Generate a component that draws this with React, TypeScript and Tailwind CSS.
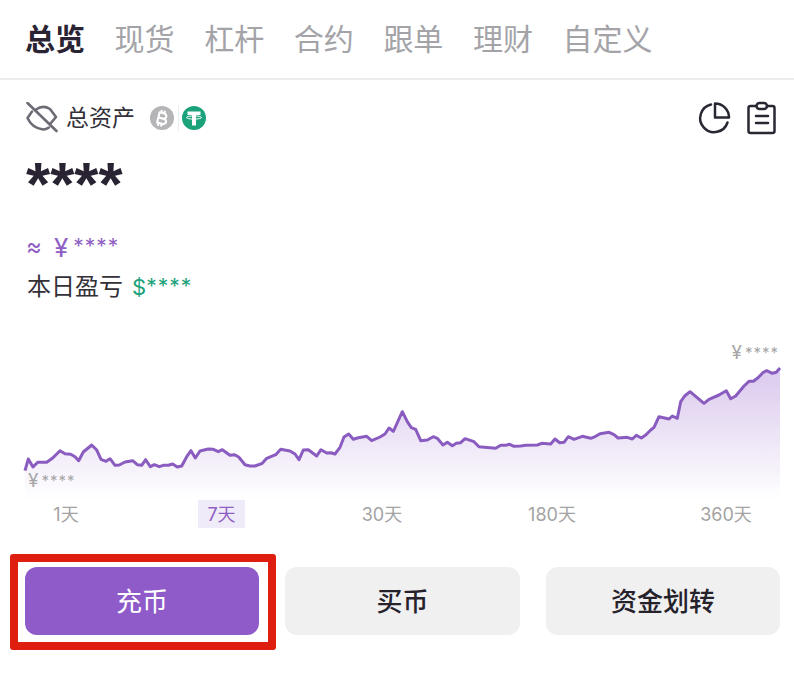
import React from "react";
import { FaBitcoinSign } from "react-icons/fa6";

const tabs = ["总览", "现货", "杠杆", "合约", "跟单", "理财", "自定义"];
const ranges = [
  { label: "1天", box: "w-[80px]" },
  { label: "7天", box: "w-[47px] ml-[92px]", active: true },
  { label: "30天", box: "w-[80px] ml-[97px]" },
  { label: "180天", box: "w-[80px] ml-[90px]" },
  { label: "360天", box: "w-[80px] ml-[94px]" },
];

// traced from the picture, in 3x crop coordinates
const leftPts = [
  [75,392],[85,357],[99,381],[113,367],[140,367],[158,354],[180,332],[195,341],[212,343],[225,350],[236,362],[250,336],[275,315],[290,330],[303,358],[318,364],[330,356],[345,376],[358,375],[375,366],[398,362],[412,374],[425,376],[437,359],[451,380],[463,374],[478,380],[490,376],[505,376],[518,372],[532,381],[545,378],[560,350],[573,332],[586,354],[600,333],[625,327],[640,328],[655,335],[667,329],[690,346],[703,344],[716,351],[735,374],[750,378],[765,378],[787,370],[800,355],[827,344],[842,328],[870,333],[885,342],[897,359],[910,330],[925,329],[950,348],[963,329],[980,339],[993,338],[1005,342],[1020,322],[1032,291],[1046,282],[1060,298],[1075,293],[1100,289],[1115,302],[1140,291],[1155,282],[1167,264],[1180,274],
];
const rightPts = [
  [0,270],[25,215],[40,245],[52,263],[65,268],[80,302],[100,300],[118,290],[130,295],[147,315],[160,307],[175,317],[187,310],[200,308],[213,296],[240,305],[255,320],[305,325],[320,316],[335,316],[347,313],[360,319],[380,318],[395,316],[430,315],[443,310],[470,312],[483,297],[497,308],[510,307],[523,290],[540,298],[565,289],[590,295],[605,289],[618,281],[645,277],[660,284],[672,294],[700,292],[715,297],[727,286],[742,294],[755,285],[770,270],[780,262],[795,230],[825,237],[835,228],[850,235],[860,185],[872,168],[888,155],[930,190],[945,178],[975,165],[997,152],[1010,176],[1025,168],[1050,138],[1065,124],[1078,124],[1092,113],[1108,97],[1118,92],[1135,100],[1147,97],[1158,84],
];
const line = [
  ...leftPts.map(([x, y]) => [x / 3, y / 3]),
  ...rightPts.map(([x, y]) => [394 + x / 3, y / 3]),
];
const linePath = line.map(([x, y], i) => `${i ? "L" : "M"}${x.toFixed(1)} ${y.toFixed(1)}`).join(" ");
const areaPath = `${linePath} L780 160 L25 160 Z`;

const ChartLabel = ({ className }: { className: string }) => (
  <span className={`absolute flex items-center text-[#a6a6a6] leading-[20px] ${className}`}>
    <span className="text-[19px]">¥</span>
    <span className="ml-[3px] text-[15px] tracking-[1px]">****</span>
  </span>
);

const Chart = () => (
  <div className="relative h-[160px] mt-[39px]">
    <svg width="794" height="160" viewBox="0 0 794 160" className="block">
      <defs>
        <linearGradient id="area" x1="0" y1="0" x2="0" y2="1">
          <stop offset="0.1" stopColor="#8f5bc9" stopOpacity="0.3" />
          <stop offset="1" stopColor="#8f5bc9" stopOpacity="0" />
        </linearGradient>
      </defs>
      <path d={areaPath} fill="url(#area)" />
      <path d={linePath} fill="none" stroke="#8a5cc0" strokeWidth="3" strokeLinejoin="round" />
    </svg>
    <ChartLabel className="right-[15px] top-[3px]" />
    <ChartLabel className="left-[28px] top-[131px]" />
  </div>
);

export default function App() {
  return (
    <div className="w-[794px] h-[686px] bg-white overflow-hidden font-['Inter','Noto_Sans_CJK_SC',sans-serif]">
      {/* Tabs */}
      <div className="flex items-center gap-[29.6px] h-[80px] px-[25px] border-b-2 border-[#ececec]">
        {tabs.map((tab, i) => (
          <span
            key={tab}
            className={`text-[30px] leading-[40px] ${i === 0 ? "font-bold text-[#2a2333]" : "text-[#a3a3a8]"}`}
          >
            {tab}
          </span>
        ))}
      </div>

      <div className="px-[26px]">
        {/* Total assets row */}
        <div className="flex items-center h-[32px] mt-[22px]">
          <svg width="32" height="32" viewBox="0 0 32 32" fill="none" stroke="#6f6b75" strokeWidth="2.6" strokeLinecap="round" strokeLinejoin="round">
            <path d="M1.500 1 L30.500 29" />
            <path d="M10 7.500 Q17 2.500 24 7 L30 15 L24.500 21.500" />
            <path d="M6 9.500 L1.500 16 Q6 26 17 27.500 Q20 27.500 23 25.500" />
          </svg>
          <span className="ml-[8px] text-[23px] leading-[32px] text-[#333038]">总资产</span>
          <div className="flex items-center ml-[15px]">
            <div className="w-[24px] h-[24px] rounded-full bg-[#b5b5b8] flex items-center justify-center">
              <FaBitcoinSign className="w-[17px] h-[17px] text-white rotate-[14deg]" />
            </div>
            <div className="w-px h-[26px] bg-[#eeeeee] mx-[3.5px]" />
            <svg width="24" height="24" viewBox="0 0 24 24">
              <circle cx="12" cy="12" r="12" fill="#1ba27a" />
              <path d="M5.500 5.500h13v3.500h-4.500v10.500h-4V9H5.500Z" fill="#fff" />
              <ellipse cx="12" cy="11.500" rx="7.500" ry="1.600" fill="none" stroke="#fff" strokeWidth="1" />
            </svg>
          </div>
          <div className="ml-auto flex items-center gap-[16px] mr-[-9px]">
            <svg width="34" height="34" viewBox="0 0 34 34" fill="none" stroke="#2a2733" strokeWidth="2.5" strokeLinecap="round" strokeLinejoin="round">
              <path d="M14 3.500a14 14 0 1 0 16.500 18" />
              <path d="M18 2.500v14h14a14 14 0 0 0-14-14Z" />
            </svg>
            <svg width="30" height="34" viewBox="0 0 30 34" fill="none" stroke="#2a2733" strokeWidth="2.5" strokeLinecap="round" strokeLinejoin="round">
              <path d="M9 5H3.500A2 2 0 0 0 1.500 7v23a2 2 0 0 0 2 2h22a2 2 0 0 0 2-2V7a2 2 0 0 0-2-2H20" />
              <rect x="9.500" y="2" width="10.500" height="6" rx="3" />
              <path d="M9 15h12M9 22h12" />
            </svg>
          </div>
        </div>

        {/* Hidden balance */}
        <div className="mt-[20px] h-[60px] text-[62px] leading-[60px] font-bold text-[#2a2333] font-['Liberation_Sans',sans-serif]">****</div>

        <div className="mt-[19px] h-[28px] flex items-center text-[#8f5fc4]">
          <span className="text-[24px]">≈</span>
          <span className="ml-[12px] text-[26px]">¥</span>
          <span className="ml-[5px] text-[21px] tracking-[1px]">****</span>
        </div>
        <div className="mt-[12px] h-[28px] flex items-center">
          <span className="ml-px text-[24px] text-[#333038]">本日盈亏</span>
          <span className="ml-[9px] text-[22px] text-[#1ba27a]">$</span>
          <span className="text-[21px] tracking-[1px] text-[#1ba27a]">****</span>
        </div>
      </div>

      <Chart />

      {/* Time ranges */}
      <div className="flex items-center h-[28px] px-[26px]">
        {ranges.map((r) => (
          <span
            key={r.label}
            className={`${r.box} h-[28px] shrink-0 flex items-center justify-center text-[18px] ${
              r.active ? "bg-[#f0ebf8] text-[#8f5fc4]" : "text-[#a3a3a3]"
            }`}
          >
            {r.label}
          </span>
        ))}
      </div>

      {/* Actions */}
      <div className="flex gap-[26px] mt-[39px] px-[25px]">
        <div className="relative w-[234px] shrink-0">
          <button className="w-full h-[68px] rounded-[12px] bg-[#8f5bc9] text-white text-[26px]">充币</button>
          <div className="absolute -left-[15px] -right-[17px] -top-[13px] -bottom-[15px] border-[8px] border-[#de1f10] rounded-[3px]" />
        </div>
        <button className="w-[235px] shrink-0 h-[68px] rounded-[12px] bg-[#f0f0f0] text-[#26222c] text-[26px] font-medium">买币</button>
        <button className="w-[234px] shrink-0 h-[68px] rounded-[12px] bg-[#f0f0f0] text-[#26222c] text-[26px] font-medium">资金划转</button>
      </div>
    </div>
  );
}
